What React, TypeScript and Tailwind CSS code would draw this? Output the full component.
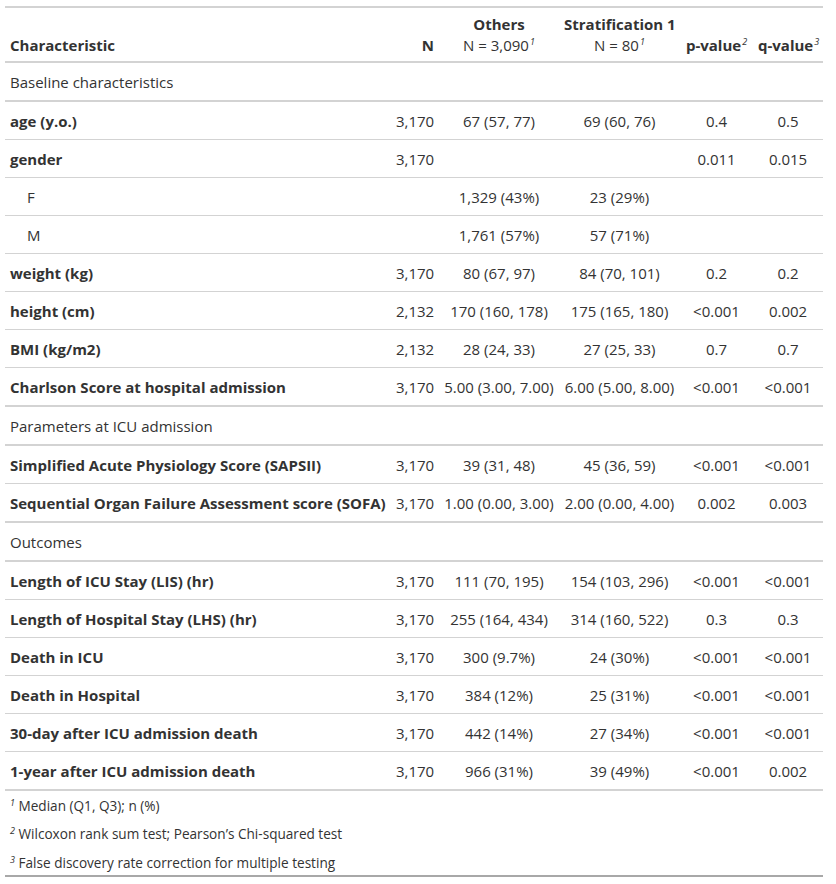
import React from "react";

type Row =
  | { kind: "group"; label: string }
  | { kind: "row"; label: string; n?: string; a?: string; b?: string; p?: string; q?: string; indent?: boolean };

const rows: Row[] = [
  { kind: "group", label: "Baseline characteristics" },
  { kind: "row", label: "age (y.o.)", n: "3,170", a: "67 (57, 77)", b: "69 (60, 76)", p: "0.4", q: "0.5" },
  { kind: "row", label: "gender", n: "3,170", p: "0.011", q: "0.015" },
  { kind: "row", label: "F", a: "1,329 (43%)", b: "23 (29%)", indent: true },
  { kind: "row", label: "M", a: "1,761 (57%)", b: "57 (71%)", indent: true },
  { kind: "row", label: "weight (kg)", n: "3,170", a: "80 (67, 97)", b: "84 (70, 101)", p: "0.2", q: "0.2" },
  { kind: "row", label: "height (cm)", n: "2,132", a: "170 (160, 178)", b: "175 (165, 180)", p: "<0.001", q: "0.002" },
  { kind: "row", label: "BMI (kg/m2)", n: "2,132", a: "28 (24, 33)", b: "27 (25, 33)", p: "0.7", q: "0.7" },
  { kind: "row", label: "Charlson Score at hospital admission", n: "3,170", a: "5.00 (3.00, 7.00)", b: "6.00 (5.00, 8.00)", p: "<0.001", q: "<0.001" },
  { kind: "group", label: "Parameters at ICU admission" },
  { kind: "row", label: "Simplified Acute Physiology Score (SAPSII)", n: "3,170", a: "39 (31, 48)", b: "45 (36, 59)", p: "<0.001", q: "<0.001" },
  { kind: "row", label: "Sequential Organ Failure Assessment score (SOFA)", n: "3,170", a: "1.00 (0.00, 3.00)", b: "2.00 (0.00, 4.00)", p: "0.002", q: "0.003" },
  { kind: "group", label: "Outcomes" },
  { kind: "row", label: "Length of ICU Stay (LIS) (hr)", n: "3,170", a: "111 (70, 195)", b: "154 (103, 296)", p: "<0.001", q: "<0.001" },
  { kind: "row", label: "Length of Hospital Stay (LHS) (hr)", n: "3,170", a: "255 (164, 434)", b: "314 (160, 522)", p: "0.3", q: "0.3" },
  { kind: "row", label: "Death in ICU", n: "3,170", a: "300 (9.7%)", b: "24 (30%)", p: "<0.001", q: "<0.001" },
  { kind: "row", label: "Death in Hospital", n: "3,170", a: "384 (12%)", b: "25 (31%)", p: "<0.001", q: "<0.001" },
  { kind: "row", label: "30-day after ICU admission death", n: "3,170", a: "442 (14%)", b: "27 (34%)", p: "<0.001", q: "<0.001" },
  { kind: "row", label: "1-year after ICU admission death", n: "3,170", a: "966 (31%)", b: "39 (49%)", p: "<0.001", q: "0.002" },
];

function Sup({ children }: { children: React.ReactNode }) {
  return (
    <span className="italic text-[9px] font-normal leading-none align-baseline relative top-[-6px] ml-[1px]">
      {children}
    </span>
  );
}

function FootSup({ children }: { children: React.ReactNode }) {
  return (
    <span className="italic text-[9px] font-normal leading-none align-baseline relative top-[-5px]">
      {children}
    </span>
  );
}

export default function App() {
  return (
    <div className="bg-white w-[836px] h-[884px] pt-[6px] pl-[5px] text-[#333333] [font-family:'Open_Sans',sans-serif] text-[15px] leading-[21px]">
      <table className="table-fixed w-[818px] border-collapse border-t-2 border-b-2 border-t-[#D3D3D3] border-b-[#A8A8A8]">
        <colgroup>
          <col className="w-[386px]" />
          <col className="w-[48px]" />
          <col className="w-[120px]" />
          <col className="w-[121px]" />
          <col className="w-[73px]" />
          <col className="w-[70px]" />
        </colgroup>
        <thead>
          <tr className="border-b-2 border-[#D3D3D3]">
            <th className="align-bottom text-left font-bold px-[5px] pt-[6px] pb-[5px] whitespace-nowrap">Characteristic</th>
            <th className="align-bottom text-right font-bold px-[5px] pt-[6px] pb-[5px]">N</th>
            <th className="align-bottom text-center px-[5px] pt-[6px] pb-[5px] whitespace-nowrap">
              <div className="font-bold">Others</div>
              <div className="font-normal">N = 3,090<Sup>1</Sup></div>
            </th>
            <th className="align-bottom text-center px-[5px] pt-[6px] pb-[5px] whitespace-nowrap">
              <div className="font-bold">Stratification 1</div>
              <div className="font-normal">N = 80<Sup>1</Sup></div>
            </th>
            <th className="align-bottom text-center font-bold px-[5px] pt-[6px] pb-[5px] whitespace-nowrap">p-value<Sup>2</Sup></th>
            <th className="align-bottom text-center font-bold px-[5px] pt-[6px] pb-[5px] whitespace-nowrap">q-value<Sup>3</Sup></th>
          </tr>
        </thead>
        <tbody>
          {rows.map((r, i) =>
            r.kind === "group" ? (
              <tr key={i} className="border-t-2 border-b-2 border-[#D3D3D3]">
                <td colSpan={6} className="px-[5px] pt-[9px] pb-[7px] text-left whitespace-nowrap">{r.label}</td>
              </tr>
            ) : (
              <tr key={i} className="border-t border-[#D3D3D3]">
                <td className={`pt-[9px] pb-[7px] pr-[5px] text-left whitespace-nowrap ${r.indent ? "pl-[22px] font-normal" : "pl-[5px] font-bold"}`}>{r.label}</td>
                <td className="pt-[9px] pb-[7px] px-[5px] text-right whitespace-nowrap">{r.n ?? ""}</td>
                <td className="pt-[9px] pb-[7px] px-[5px] text-center whitespace-nowrap">{r.a ?? ""}</td>
                <td className="pt-[9px] pb-[7px] px-[5px] text-center whitespace-nowrap">{r.b ?? ""}</td>
                <td className="pt-[9px] pb-[7px] px-[5px] text-center whitespace-nowrap">{r.p ?? ""}</td>
                <td className="pt-[9px] pb-[7px] px-[5px] text-center whitespace-nowrap">{r.q ?? ""}</td>
              </tr>
            )
          )}
        </tbody>
        <tfoot className="text-[13.6px] leading-[19px]">
          <tr className="border-t-2 border-[#D3D3D3]">
            <td colSpan={6} className="px-[5px] pt-[5px] pb-[4px] whitespace-nowrap"><FootSup>1</FootSup> Median (Q1, Q3); n (%)</td>
          </tr>
          <tr>
            <td colSpan={6} className="px-[5px] pt-[5px] pb-[5px] whitespace-nowrap"><FootSup>2</FootSup> Wilcoxon rank sum test; Pearson’s Chi-squared test</td>
          </tr>
          <tr>
            <td colSpan={6} className="px-[5px] pt-[5px] pb-[3px] whitespace-nowrap"><FootSup>3</FootSup> False discovery rate correction for multiple testing</td>
          </tr>
        </tfoot>
      </table>
    </div>
  );
}
